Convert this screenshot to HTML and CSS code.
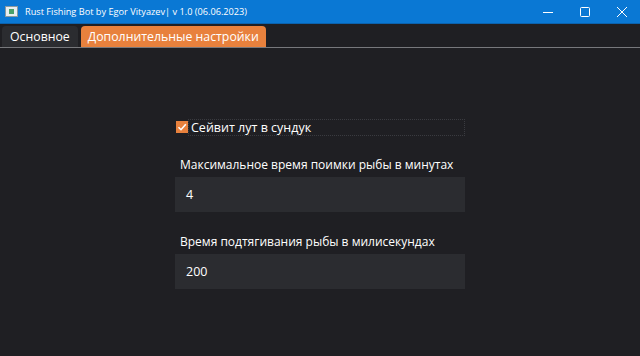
FILE: index.html
```html
<!DOCTYPE html>
<html lang="ru">
<head>
    <meta charset="UTF-8">
    <title>Rust Fishing Bot</title>
    <link rel="stylesheet" href="styles.css">
</head>
<body>
    <div class="titlebar">
        <div class="app-icon"><span></span></div>
        <div class="title">Rust Fishing Bot by Egor Vityazev| v 1.0 (06.06.2023)</div>
        <div class="win-buttons">
            <div class="win-btn">
                <svg width="10" height="10" viewBox="0 0 10 10"><path d="M0 5.5H10" stroke="#fff" stroke-width="1"/></svg>
            </div>
            <div class="win-btn">
                <svg width="10" height="10" viewBox="0 0 10 10"><rect x="0.5" y="0.5" width="9" height="9" rx="1" fill="none" stroke="#fff" stroke-width="1"/></svg>
            </div>
            <div class="win-btn">
                <svg width="10" height="10" viewBox="0 0 10 10"><path d="M0 0L10 10M10 0L0 10" stroke="#fff" stroke-width="1"/></svg>
            </div>
        </div>
    </div>

    <div class="tabs">
        <div class="tab">Основное</div>
        <div class="tab active">Дополнительные настройки</div>
    </div>

    <div class="content">
        <div class="settings">
            <label class="check-row">
                <span class="checkbox">
                    <svg width="12" height="12" viewBox="0 0 12 12"><path d="M2.5 6.2L5 8.7L9.8 3.2" fill="none" stroke="#fff" stroke-width="1.6"/></svg>
                </span>
                <span class="check-text">Сейвит лут в сундук</span>
            </label>

            <div class="field">
                <div class="field-label">Максимальное время поимки рыбы в минутах</div>
                <div class="field-input">4</div>
            </div>

            <div class="field">
                <div class="field-label">Время подтягивания рыбы в милисекундах</div>
                <div class="field-input">200</div>
            </div>
        </div>
    </div>
</body>
</html>
```

FILE: styles.css
```css
body {
    margin: 0;
    padding: 0;
    width: 640px;
    height: 356px;
    overflow: hidden;
    background-color: #1f1f23;
    color: #ffffff;
    font-family: "Open Sans", "Noto Sans", sans-serif;
}
.titlebar {
    display: flex;
    align-items: center;
    height: 23px;
    background-color: #0a78d4;
    border-bottom: 1px solid #0b62ad;
}
.app-icon {
    width: 11px;
    height: 9px;
    margin: 0 7px 0 5px;
    background-color: #e8eef0;
    border: 1px solid #8a9aa0;
    display: flex;
    align-items: center;
    justify-content: center;
}
.app-icon span {
    width: 5px;
    height: 5px;
    background-color: #4aa06a;
}
.title {
    flex: 1;
    font-size: 9.2px;
    color: #ffffff;
}
.win-buttons {
    display: flex;
    height: 100%;
}
.win-btn {
    width: 37px;
    display: flex;
    align-items: center;
    justify-content: center;
}
.tabs {
    display: flex;
    align-items: flex-end;
    gap: 3px;
    height: 23px;
    padding-left: 2px;
    border-bottom: 1px solid #77787c;
}
.tab {
    height: 21px;
    padding: 0 8px;
    border-radius: 4px 4px 0 0;
    background-color: #2b2c30;
    font-size: 12.3px;
    line-height: 21px;
    color: #ffffff;
}
.tab.active {
    padding: 0 7px;
    background-color: #e8813d;
}
.content {
    display: flex;
    justify-content: center;
    padding-top: 71px;
}
.settings {
    width: 290px;
}
.check-row {
    display: flex;
    align-items: center;
    height: 16px;
    margin-left: 1px;
}
.checkbox {
    width: 12px;
    height: 12px;
    background-color: #e8813d;
    display: flex;
}
.check-text {
    flex: 1;
    height: 15px;
    line-height: 15px;
    margin-left: 0;
    padding-left: 2px;
    font-size: 12.5px;
    border: 1px dotted #3a3b40;
}
.field {
    margin-top: 21px;
}
.field + .field {
    margin-top: 21px;
}
.field-label {
    font-size: 12px;
    padding-left: 5px;
    margin-bottom: 4px;
}
.field-input {
    height: 35px;
    line-height: 35px;
    padding-left: 11px;
    background-color: #2b2c30;
    font-size: 12.5px;
}
```
